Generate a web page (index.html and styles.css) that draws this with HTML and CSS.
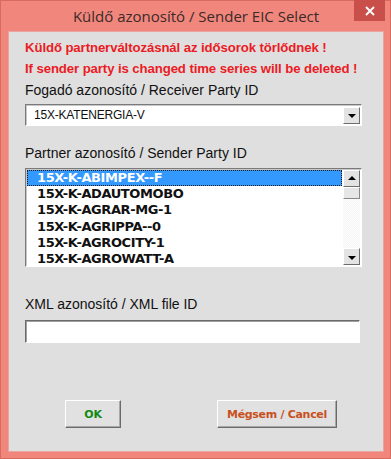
FILE: index.html
```html
<!DOCTYPE html>
<html lang="hu">
<head>
  <meta charset="UTF-8">
  <title>Küldő azonosító / Sender EIC Select</title>
  <link rel="stylesheet" href="styles.css">
</head>
<body>
  <div class="window">
    <div class="titlebar">
      <span class="title">Küldő azonosító / Sender EIC Select</span>
      <span class="close">
        <svg width="10" height="10" viewBox="0 0 10 10"><path d="M1 1L9 9M9 1L1 9" stroke="#fff" stroke-width="1.8"/></svg>
      </span>
    </div>
    <div class="client">
      <p class="warn">Küldő partnerváltozásnál az idősorok törlődnek !</p>
      <p class="warn">If sender party is changed time series will be deleted !</p>

      <div class="label">Fogadó azonosító / Receiver Party ID</div>
      <div class="combo">
        <span class="combo-text">15X-KATENERGIA-V</span>
        <span class="sbtn down"></span>
      </div>

      <div class="label gap">Partner azonosító / Sender Party ID</div>
      <div class="listbox">
        <ul class="items">
          <li class="sel">15X-K-ABIMPEX--F</li>
          <li>15X-K-ADAUTOMOBO</li>
          <li>15X-K-AGRAR-MG-1</li>
          <li>15X-K-AGRIPPA--0</li>
          <li>15X-K-AGROCITY-1</li>
          <li>15X-K-AGROWATT-A</li>
        </ul>
        <div class="scroll">
          <span class="sbtn up"></span>
          <span class="thumb"></span>
          <span class="track"></span>
          <span class="sbtn down"></span>
        </div>
      </div>

      <div class="label gap2">XML azonosító / XML file ID</div>
      <div class="textbox"></div>

      <div class="buttons">
        <button class="btn ok">OK</button>
        <button class="btn cancel">Mégsem / Cancel</button>
      </div>
    </div>
  </div>
</body>
</html>
```

FILE: styles.css
```css
html, body { margin: 0; padding: 0; }
body { width: 391px; height: 459px; overflow: hidden; font-family: "Liberation Sans", Arial, sans-serif; }

.window { width: 391px; height: 459px; box-sizing: border-box; background: #f1877c; border: 1px solid #d86a60; padding: 0 6px 6px 7px; display: flex; flex-direction: column; }
.titlebar { height: 30px; position: relative; display: flex; align-items: center; justify-content: center; }
.title { font-family: "Open Sans", "Noto Sans", sans-serif; font-size: 15px; color: #3b2a28; margin-top: -1px; }
.close { position: absolute; right: -1px; top: -1px; width: 31px; height: 21px; background: #c9504a; display: flex; align-items: center; justify-content: center; }

.client { flex: 1; background: #dfdfdf; border: 1px solid #e9a59e; padding: 6px 0 0 16px; }

.warn { margin: 0; color: #ec1b24; font-weight: bold; font-size: 13.2px; line-height: 20.5px; letter-spacing: -0.1px; }
.label { font-size: 14px; color: #111; line-height: 20px; margin-top: 1px; }
.label.gap { margin-top: 17px; }
.label.gap2 { margin-top: 27px; }

.combo { margin-top: 4px; width: 337px; height: 22px; box-sizing: border-box; background: #fff; border: 1px solid; border-color: #7a7a7a #fff #fff #7a7a7a; box-shadow: inset 1px 1px 0 #c8c8c8; display: flex; align-items: center; justify-content: space-between; padding: 1px 1px 1px 8px; }
.combo-text { font-family: "Liberation Sans", Arial, sans-serif; font-size: 12px; color: #111; letter-spacing: -0.2px; }

.sbtn { width: 17px; height: 17px; box-sizing: border-box; background: #e3e3e3; border: 1px solid; border-color: #fff #6e6e6e #6e6e6e #fff; display: flex; align-items: center; justify-content: center; }
.sbtn::after { content: ""; border-left: 4px solid transparent; border-right: 4px solid transparent; }
.sbtn.down::after { border-top: 4px solid #000; margin-top: 2px; }
.sbtn.up::after { border-bottom: 4px solid #000; margin-top: -2px; }

.listbox { margin-top: 5px; width: 337px; height: 99px; box-sizing: border-box; background: #fff; border: 1px solid; border-color: #7a7a7a #fff #fff #7a7a7a; box-shadow: inset 1px 1px 0 #c8c8c8; display: flex; padding: 1px; }
.items { list-style: none; margin: 0; padding: 0; flex: 1; overflow: hidden; }
.items li { height: 16.2px; line-height: 16.2px; font-family: "DejaVu Sans", Verdana, sans-serif; font-weight: bold; font-size: 13px; color: #111; padding-left: 10px; letter-spacing: -0.4px; }
.items li.sel { background: #3399ff; color: #fff; outline: 1px dotted #1a1a1a; outline-offset: -1px; margin-right: 1px; }
.scroll { width: 17px; display: flex; flex-direction: column; }
.thumb { height: 12px; background: #e6e6e6; border: 1px solid; border-color: #fff #8a8a8a #8a8a8a #fff; box-sizing: border-box; }
.track { flex: 1; background: repeating-conic-gradient(#f4f4f4 0 25%, #ffffff 0 50%) 0 0 / 2px 2px; }

.textbox { margin-top: 6px; width: 335px; height: 23px; box-sizing: border-box; background: #fff; border: 1px solid; border-color: #6a6a6a #fff #fff #6a6a6a; box-shadow: inset 1px 1px 0 #a0a0a0; }

.buttons { margin-top: 57px; display: flex; padding-left: 40px; gap: 96px; }
.btn { height: 28px; box-sizing: border-box; background: #e1e1e1; border: 1px solid; border-color: #fff #6a6a6a #6a6a6a #fff; box-shadow: inset -1px -1px 0 #a8a8a8; font-family: "DejaVu Sans", Verdana, sans-serif; font-weight: bold; font-size: 11px; letter-spacing: -0.3px; padding: 0; }
.btn.ok { width: 56px; color: #128a12; }
.btn.cancel { width: 120px; color: #c8501e; }
```
